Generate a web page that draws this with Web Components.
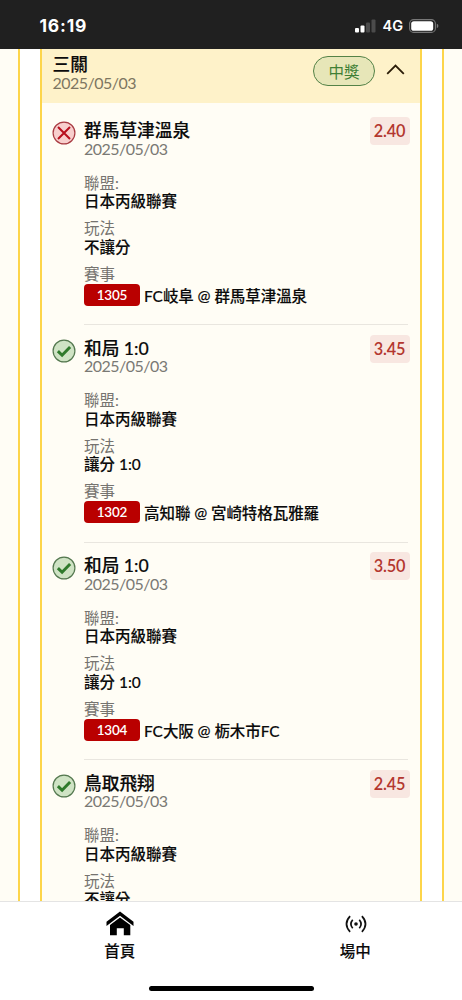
<!DOCTYPE html>
<html lang="zh-Hant">
<head>
<meta charset="utf-8">
<meta name="viewport" content="width=device-width">
<title>三關</title>
<style>
html,body{margin:0;height:100%;overflow:hidden;background:#fff}
body{font-family:Lato,"Noto Sans CJK TC",sans-serif;font-size:15.5px;color:#0b0b0b}
</style>
</head>
<body>
<bet-app></bet-app>
<script>
const define = (name, html) => {
  const t = document.createElement('template');
  t.innerHTML = html;
  customElements.define(name, class extends HTMLElement {
    constructor() {
      super();
      this.attachShadow({ mode: 'open' }).append(t.content.cloneNode(true));
    }
  });
};

define('status-bar', `
<style>
:host{display:flex;flex:none;height:49px;box-sizing:border-box;background:#202020;color:#fff;padding:2px 23px 0 39.5px;align-items:center;justify-content:space-between;font-family:Inter,sans-serif}
.time{font-weight:700;font-size:17.5px;letter-spacing:.8px}
.right{display:flex;align-items:center}
.net{font-weight:600;font-size:14.5px;margin:0 6px 0 6px}
svg{display:block}
</style>
<span class="time">16:19</span>
<div class="right">
<svg width="21" height="14" viewBox="0 0 21 14"><rect x="0" y="9" width="4" height="4.5" rx="1" fill="#fff"/><rect x="5.5" y="6.5" width="4" height="7" rx="1" fill="#fff"/><rect x="11" y="3.5" width="4" height="10" rx="1" fill="#4b4b4b"/><rect x="16.5" y="0.5" width="4" height="13" rx="1" fill="#4b4b4b"/></svg>
<span class="net">4G</span>
<svg width="30" height="14" viewBox="0 0 30 14"><rect x=".6" y=".6" width="25.8" height="12.8" rx="4" fill="none" stroke="#777" stroke-width="1.1"/><rect x="2.2" y="2.2" width="22" height="9.6" rx="2.6" fill="#fff"/><path d="M27.8 4.8q1.6.6 1.6 2.2t-1.6 2.2z" fill="#777"/></svg>
</div>`);

define('slip-header', `
<style>
:host{display:flex;height:54px;box-sizing:border-box;background:#fef2c9;padding:6px 15px 0 10.5px;align-items:flex-start}
.t{flex:1}
.name{font-size:17.7px;line-height:20px;font-weight:500;-webkit-text-stroke:.15px}
.date{font-size:16px;letter-spacing:-.52px;line-height:18px;color:#7d7661;margin-top:-1px}
.won{box-sizing:border-box;width:62px;height:30px;margin:1px 11px 0 0;border:1.3px solid #548247;border-radius:15px;background:#e7e6b8;color:#3f7f35;display:flex;align-items:center;justify-content:center;font-size:15.5px;padding-bottom:1px}
svg{margin-top:8px}
</style>
<div class="t"><div class="name"><slot name="name"></slot></div><div class="date"><slot name="date"></slot></div></div>
<div class="won"><slot name="result"></slot></div>
<svg width="19" height="14" viewBox="0 0 19 14"><path d="M1.2 10.8 9.5 2.6l8.3 8.2" fill="none" stroke="#2b1d08" stroke-width="1.8"/></svg>`);

define('mark-won', `<style>:host{display:block}svg{display:block}</style>
<svg width="24" height="24" viewBox="0 0 24 24"><circle cx="12" cy="12" r="10.9" fill="#cfe3c4" stroke="#54784f" stroke-width="1.2"/><path d="m5.9 12.1 4.2 4.1 8-8.2" fill="none" stroke="#2f7a2b" stroke-width="3"/></svg>`);
define('mark-lost', `<style>:host{display:block}svg{display:block}</style>
<svg width="24" height="24" viewBox="0 0 24 24"><circle cx="12" cy="12" r="10.9" fill="#f8cfcd" stroke="#a83b42" stroke-width="1.2"/><path d="m6 6 12 12m0-12L6 18" fill="none" stroke="#b8101e" stroke-width="2"/></svg>`);

define('bet-leg', `
<style>
:host{display:flex;height:217.5px;box-sizing:border-box;padding:0 9.5px 0 9.5px}
:host([partial]) .last,:host([partial]) .game{display:none}
.mark{flex:none;width:32.5px;padding-top:13.5px}
.main{flex:1;position:relative;padding-top:13.5px;box-sizing:border-box;border-bottom:1px solid #e9e6df;margin-right:3px;white-space:nowrap}
.title{font-size:17.7px;line-height:19px;font-weight:500;-webkit-text-stroke:.15px}
.date{font-size:16px;letter-spacing:-.52px;line-height:18px;color:#7a7974;margin:-.5px 0 16px}
.k{line-height:18.5px;color:#75736f}
.v{line-height:18.5px;font-weight:500;-webkit-text-stroke:.12px;margin-bottom:8.5px}
.odds{position:absolute;right:-2px;top:9.5px;width:40px;height:28px;border-radius:4px;background:#f8e7e1;color:#b3362e;font-size:16.3px;letter-spacing:-.2px;font-weight:600;line-height:28px;text-align:center}
.game{display:flex;align-items:center;font-weight:500;letter-spacing:-.06px;height:22px;margin-top:.5px}
.txt{-webkit-text-stroke:.12px}
.no{box-sizing:border-box;width:56px;height:22px;border-radius:4px;background:#b90000;color:#fff;font-size:13.5px;letter-spacing:-.2px;font-weight:600;line-height:22px;text-align:center;margin-right:4px}
</style>
<div class="mark"><slot name="mark"></slot></div>
<div class="main">
<div class="title"><slot name="title"></slot></div>
<div class="date"><slot name="date"></slot></div>
<div class="k">聯盟:</div><div class="v"><slot name="league"></slot></div>
<div class="k">玩法</div><div class="v"><slot name="play"></slot></div>
<div class="k last">賽事</div><div class="game"><span class="no"><slot name="no"></slot></span><span class="txt"><slot name="game"></slot></span></div>
<div class="odds"><slot name="odds"></slot></div>
</div>`);

define('bet-slip', `
<style>
:host{display:block;flex:1;min-height:0;overflow:hidden;background:#fffdf5;padding:0 18px}
.outer{background:#fff;border:solid #fdd54a;border-width:0 2px;padding:0 20px}
.inner{background:#fffdf5;border:solid #fdd54a;border-width:0 2px}
.legs{padding-top:4.5px}
</style>
<div class="outer"><div class="inner"><slot name="header"></slot><div class="legs"><slot></slot></div></div></div>`);

define('tab-item', `
<style>
:host{display:flex;flex:1;flex-direction:column;align-items:center;font-weight:500;line-height:20px;-webkit-text-stroke:.1px}
.i{height:38px;display:flex;align-items:center}
</style>
<div class="i"><slot name="icon"></slot></div><slot></slot>`);

define('icon-home', `<style>:host,svg{display:block}svg{margin-top:3px}</style>
<svg width="28" height="25" viewBox="0 0 28 26" preserveAspectRatio="none"><path d="M14 .6 27.5 11.3v4.2L14 4.9.5 15.5v-4.2z"/><path d="M14 6.7 24.3 14.6v10.5h-6.5v-7.2h-7v7.2H4V14.6z"/></svg>`);
define('icon-live', `<style>:host,svg{display:block}svg{margin:3px 0 0 1px}</style>
<svg width="22" height="18" viewBox="0 0 22 18" fill="none" stroke="#111" stroke-width="1.7"><circle cx="11" cy="9" r="1.8" fill="#111" stroke="none"/><path d="M7.7 4.7q-3.6 4.3 0 8.6M14.3 4.7q3.6 4.3 0 8.6M5.1 1.2q-7.2 7.8 0 15.6M16.9 1.2q7.2 7.8 0 15.6"/></svg>`);

define('tab-bar', `
<style>
:host{display:flex;flex-direction:column;flex:none;height:99px;box-sizing:border-box;border-top:1px solid #e4e4e4;background:#fff}
.tabs{display:flex;flex:1;padding:1px 0 0 2px;margin-right:-11px}
.pill{width:165px;height:5.5px;border-radius:3px;background:#000;margin:0 auto 9px 148.5px}
</style>
<div class="tabs"><slot></slot></div><div class="pill"></div>`);

const leg = (mark, title, play, odds, no, game) => `
<bet-leg${no ? '' : ' partial'}><mark-${mark} slot="mark"></mark-${mark}><span slot="title">${title}</span><span slot="date">2025/05/03</span>
<span slot="league">日本丙級聯賽</span><span slot="play">${play}</span>${no ? `<span slot="no">${no}</span><span slot="game">${game.replace('@', '<span class="at">@</span>')}</span>` : ''}<span slot="odds">${odds}</span></bet-leg>`;

define('bet-app', `
<style>:host{display:flex;flex-direction:column;height:1000px}.at{vertical-align:1px;line-height:0}</style>
<status-bar></status-bar>
<bet-slip>
<slip-header slot="header"><span slot="name">三關</span><span slot="date">2025/05/03</span><span slot="result">中獎</span></slip-header>
${leg('lost', '群馬草津溫泉', '不讓分', '2.40', '1305', 'FC岐阜 @ 群馬草津溫泉')}
${leg('won', '和局 1:0', '讓分 1:0', '3.45', '1302', '高知聯 @ 宮崎特格瓦雅羅')}
${leg('won', '和局 1:0', '讓分 1:0', '3.50', '1304', 'FC大阪 @ 栃木市FC')}
${leg('won', '鳥取飛翔', '不讓分', '2.45')}
</bet-slip>
<tab-bar>
<tab-item><icon-home slot="icon"></icon-home>首頁</tab-item>
<tab-item><icon-live slot="icon"></icon-live>場中</tab-item>
</tab-bar>`);
</script>
</body>
</html>
